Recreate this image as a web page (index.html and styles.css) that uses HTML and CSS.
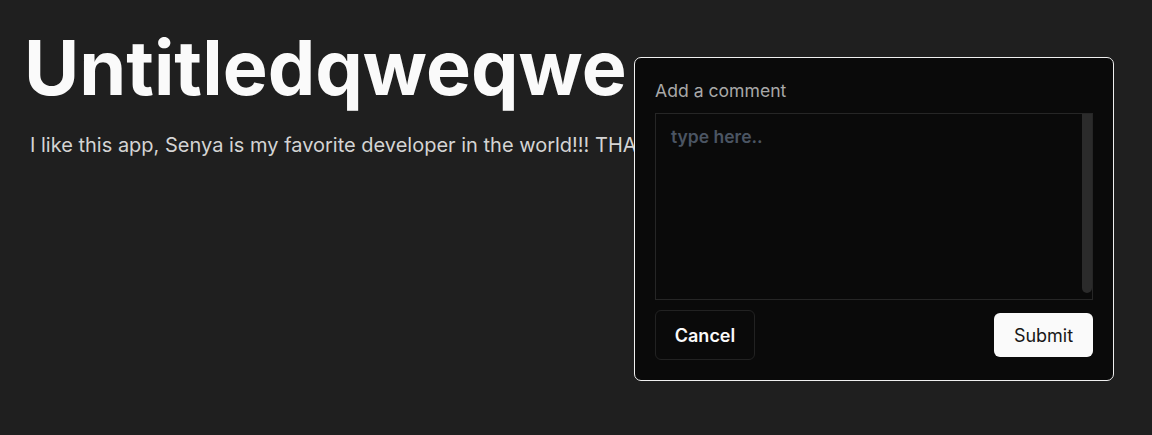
FILE: index.html
```html
<!DOCTYPE html>
<html>
<head>
<meta charset="utf-8">
<link rel="stylesheet" href="styles.css">
</head>
<body>
<main class="page">
  <h1 class="title">Untitledqweqwe</h1>
  <p class="body-text">I like this app, Senya is my favorite developer in the world!!! THANK YOU SO MUCH</p>
</main>
<div class="popover">
  <label class="label" for="c">Add a comment</label>
  <div class="field">
    <textarea id="c" class="input" placeholder="type here.."></textarea>
    <span class="scrollbar"></span>
  </div>
  <div class="actions">
    <button class="btn btn-cancel">Cancel</button>
    <button class="btn btn-submit">Submit</button>
  </div>
</div>
</body>
</html>
```
FILE: styles.css
```css
html, body {
  margin: 0;
  padding: 0;
  background: #1f1f1f;
  font-family: Inter, "Liberation Sans", sans-serif;
  overflow: hidden;
}
.page {
  padding: 22px 24px 0 24px;
}
.title {
  margin: 0;
  font-size: 75.5px;
  font-weight: 700;
  color: #fafafa;
  line-height: 92px;
}
.body-text {
  margin: 19px 0 0 6px;
  font-size: 20px;
  line-height: 24px;
  color: #d4d4d4;
  white-space: nowrap;
}
.popover {
  position: absolute;
  left: 634px;
  top: 57px;
  width: 480px;
  height: 324px;
  box-sizing: border-box;
  background: #0a0a0a;
  border: 1px solid #f0f0f0;
  border-radius: 7px;
  padding: 21px 20px 0 20px;
  display: flex;
  flex-direction: column;
}
.label {
  font-size: 17.6px;
  color: #a8a8a8;
  line-height: 24px;
}
.field {
  position: relative;
  margin-top: 10px;
  height: 187px;
  display: flex;
}
.input {
  flex: 1;
  box-sizing: border-box;
  background: #0a0a0a;
  border: 1px solid #262626;
  border-radius: 0;
  padding: 12px 15px;
  font-family: Inter, "Liberation Sans", sans-serif;
  font-size: 17.5px;
  font-weight: 600;
  color: #e5e5e5;
  resize: none;
  outline: none;
  overflow: hidden;
}
.input::placeholder {
  color: #4b5563;
}
.scrollbar {
  position: absolute;
  right: 1px;
  top: 1px;
  width: 10px;
  height: 179px;
  background: #2b2b2b;
  border-radius: 0 0 5px 5px;
}
.actions {
  margin-top: 10px;
  display: flex;
  justify-content: space-between;
  align-items: center;
}
.btn {
  font-family: Inter, "Liberation Sans", sans-serif;
  font-size: 18px;
  border-radius: 6px;
  cursor: pointer;
}
.btn-cancel {
  width: 100px;
  height: 50px;
  background: #0a0a0a;
  border: 1px solid #222222;
  color: #fafafa;
  font-weight: 600;
}
.btn-submit {
  width: 99px;
  height: 44px;
  background: #fafafa;
  border: none;
  color: #171717;
  font-weight: 400;
}
```
